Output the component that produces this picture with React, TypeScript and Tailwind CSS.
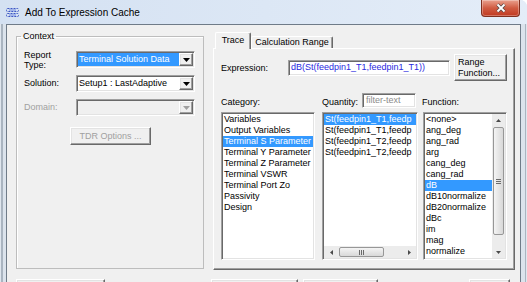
import React from "react";

const sunken =
  "border border-t-[#a0a0a0] border-l-[#a0a0a0] border-b-white border-r-white shadow-[inset_1px_1px_0_#696969,inset_-1px_-1px_0_#e3e3e3] p-[1px]";
const raised =
  "border border-t-white border-l-white border-b-[#696969] border-r-[#696969] shadow-[inset_-1px_-1px_0_#a0a0a0,inset_1px_1px_0_#e3e3e3] bg-[#f0f0f0]";

function Down({ c = "#000", w = 7, h = 4 }: { c?: string; w?: number; h?: number }) {
  return (
    <svg width={w} height={h} viewBox={`0 0 ${w} ${h}`}>
      <path d={`M0 0H${w}L${w / 2} ${h}Z`} fill={c} />
    </svg>
  );
}
function Up({ c = "#4a4a4a" }: { c?: string }) {
  return (
    <svg width="5" height="3" viewBox="0 0 5 3">
      <path d="M0 3H5L2.5 0Z" fill={c} />
    </svg>
  );
}
function Left() {
  return (
    <svg width="3" height="5" viewBox="0 0 3 5">
      <path d="M3 0V5L0 2.5Z" fill="#4a4a4a" />
    </svg>
  );
}
function Right() {
  return (
    <svg width="3" height="5" viewBox="0 0 3 5">
      <path d="M0 0V5L3 2.5Z" fill="#4a4a4a" />
    </svg>
  );
}

function Combo({ children, disabled }: { children?: React.ReactNode; disabled?: boolean }) {
  return (
    <div className={`w-[119px] h-[17px] flex ${sunken}`}>
      <div className={`flex-1 flex items-stretch ${disabled ? "bg-[#f0f0f0]" : "bg-white"}`}>{children}</div>
      <div className={`w-[14px] flex items-center justify-center ${raised}`}>
        <Down c={disabled ? "#a0a0a0" : "#000"} />
      </div>
    </div>
  );
}

function Item({ t, sel }: { t: string; sel?: boolean }) {
  return (
    <div
      className={`h-[11px] leading-[11px] whitespace-nowrap overflow-hidden pl-[1px] ${
        sel ? "bg-[#3399ff] text-white" : ""
      }`}
    >
      {t}
    </div>
  );
}

function TitleIcon() {
  return (
    <svg width="13" height="9" viewBox="0 0 13 9">
      <rect x="0.5" y="0.5" width="12" height="3" rx="1" fill="none" stroke="#3d56c4" strokeDasharray="2 1" />
      <rect x="0.5" y="5.5" width="12" height="3" rx="1" fill="none" stroke="#3d56c4" strokeDasharray="2 1" />
      <path d="M3 2H10M3 7H10" stroke="#6f86e0" strokeWidth="1" />
    </svg>
  );
}

const cats = [
  "Variables",
  "Output Variables",
  "Terminal S Parameter",
  "Terminal Y Parameter",
  "Terminal Z Parameter",
  "Terminal VSWR",
  "Terminal Port Zo",
  "Passivity",
  "Design",
];
const qty = [
  "St(feedpin1_T1,feedp",
  "St(feedpin1_T1,feedp",
  "St(feedpin1_T2,feedp",
  "St(feedpin1_T2,feedp",
];
const funcs = [
  "<none>",
  "ang_deg",
  "ang_rad",
  "arg",
  "cang_deg",
  "cang_rad",
  "dB",
  "dB10normalize",
  "dB20normalize",
  "dBc",
  "im",
  "mag",
  "normalize",
];

export default function App() {
  return (
    <div className="w-[527px] h-[282px] overflow-hidden flex flex-col bg-[#dae5f3] rounded-tr-[7px] font-[family-name:'Liberation_Sans',Arial,sans-serif] text-[9px] leading-[11px] text-black">
      {/* Title bar */}
      <div className="h-[24px] shrink-0 flex items-start bg-linear-to-r from-[#d4e1f2] to-[#e4edf8]">
        <div className="mt-[8px] ml-[6px] flex">
          <TitleIcon />
        </div>
        <div className="ml-[6px] mt-[6px] text-[10px] leading-[14px] text-black">Add To Expression Cache</div>
        <div className="ml-auto mr-[7px] w-[39px] h-[17px] rounded-b-[4px] border border-t-0 border-[#80301f] bg-linear-to-b from-[#e9a08e] via-[#d05b42] to-[#c0391f] shadow-[inset_0_0_0_1px_rgba(255,255,255,0.3)] flex items-center justify-center">
          <svg width="12" height="10" viewBox="0 0 12 10">
            <path d="M2.5 1.5L9.5 8.5M9.5 1.5L2.5 8.5" stroke="#5a4a48" strokeWidth="3.4" />
            <path d="M2.5 1.5L9.5 8.5M9.5 1.5L2.5 8.5" stroke="#ffffff" strokeWidth="1.8" />
          </svg>
        </div>
      </div>

      <div className="flex flex-1 min-h-0">
        <div className="w-[6px] shrink-0 bg-[linear-gradient(to_right,#dfe6ee_0,#dfe6ee_1px,#a9b4c0_1px,#a9b4c0_3px,#dbe3ec_3px)]" />
        <div className="flex-1 min-w-0 border-l border-t border-r border-[#6f7b88] bg-[#f0f0f0] flex flex-col overflow-hidden">
          <div className="flex items-start pl-[9px] pt-[6px] shrink-0">
            {/* Context group */}
            <fieldset className="w-[188px] h-[238px] border border-[#bdbdbd] shadow-[inset_1px_1px_0_#ffffff] pl-[7px]">
              <legend className="ml-[-3px] px-[2px] text-[9px] leading-[11px]">Context</legend>
              <div className="flex items-start mt-[8px]">
                <div className="w-[52px] leading-[10px]">
                  Report
                  <br />
                  Type:
                </div>
                <div className="mt-[1px]">
                  <Combo>
                    <div className="flex-1 bg-[#3399ff] text-white flex items-center pl-[1px] whitespace-nowrap overflow-hidden">
                      Terminal Solution Data
                    </div>
                  </Combo>
                </div>
              </div>
              <div className="flex items-center mt-[5px] h-[17px]">
                <div className="w-[52px]">Solution:</div>
                <Combo>
                  <div className="flex-1 flex items-center pl-[1px] whitespace-nowrap overflow-hidden">
                    Setup1 : LastAdaptive
                  </div>
                </Combo>
              </div>
              <div className="flex items-center mt-[7px] h-[17px]">
                <div className="w-[52px] text-[#a0a0a0]">Domain:</div>
                <Combo disabled />
              </div>
              <div
                className={`ml-[46px] mt-[11px] w-[81px] h-[18px] flex items-center justify-center text-[#a0a0a0] ${raised}`}
              >
                TDR Options ...
              </div>
            </fieldset>

            {/* Tab control */}
            <div className="ml-[9px] mt-[1px] w-[302px] flex flex-col">
              <div className="h-[16px] flex items-end pl-[2px]">
                <div className="relative z-10 h-[17px] w-[36px] -mb-[1px] bg-[#f0f0f0] border-l border-t border-r border-l-white border-t-white border-r-[#696969] shadow-[inset_-1px_0_0_#a0a0a0] rounded-t-[2px] flex justify-center pt-[2px]">
                  Trace
                </div>
                <div className="h-[12px] w-[82px] bg-[#f0f0f0] border-l border-t border-r border-l-white border-t-white border-r-[#696969] shadow-[inset_-1px_0_0_#a0a0a0] rounded-t-[2px] flex justify-center leading-[11px]">
                  Calculation Range
                </div>
              </div>
              <div className="h-[222px] border border-t-white border-l-white border-r-[#696969] border-b-[#696969] shadow-[inset_-1px_-1px_0_#a0a0a0] flex flex-col">
                {/* Expression row */}
                <div className="flex items-center mt-[5px] pl-[7px] h-[27px]">
                  <div className="w-[67px] mt-[2px]">Expression:</div>
                  <div className={`w-[162px] h-[16px] bg-white ${sunken}`}>
                    <div className="pl-[1px] h-full flex items-center text-[#2a2ae0] whitespace-nowrap overflow-hidden bg-white">
                      dB(St(feedpin1_T1,feedpin1_T1))
                    </div>
                  </div>
                  <div className={`ml-[4px] w-[53px] h-[27px] flex flex-col justify-center pl-[3px] leading-[11px] ${raised}`}>
                    <span>Range</span>
                    <span>Function...</span>
                  </div>
                </div>
                {/* labels row */}
                <div className="flex items-start mt-[12px] pl-[7px] h-[15px]">
                  <div className="w-[101px] mt-[4px]">Category:</div>
                  <div className="w-[40px] mt-[4px]">Quantity:</div>
                  <div className={`w-[54px] h-[15px] bg-white ${sunken}`}>
                    <div className="pl-[2px] h-full flex items-center text-[#8c8c8c] bg-white">filter-text</div>
                  </div>
                  <div className="ml-[6px] mt-[4px]">Function:</div>
                </div>
                {/* lists */}
                <div className="flex items-start mt-[4px] pl-[7px]">
                  <div className={`w-[94px] h-[148px] bg-white ${sunken}`}>
                    {cats.map((c, i) => (
                      <Item key={c} t={c} sel={i === 2} />
                    ))}
                  </div>
                  <div className={`ml-[7px] w-[96px] h-[148px] bg-white flex flex-col ${sunken}`}>
                    <div className="flex-1 overflow-hidden">
                      {qty.map((c, i) => (
                        <Item key={i} t={c} sel={i === 0} />
                      ))}
                    </div>
                    <div className="h-[12px] flex items-stretch bg-[#ececec]">
                      <div className="w-[14px] flex items-center justify-center">
                        <Left />
                      </div>
                      <div className="ml-[1px] my-[1px] w-[45px] rounded-[2px] border border-[#979797] bg-linear-to-b from-[#f4f4f4] to-[#d8d8d8] flex items-center justify-center gap-[1px]">
                        <div className="w-[1px] h-[5px] bg-[#6b6b6b]" />
                        <div className="w-[1px] h-[5px] bg-[#6b6b6b]" />
                        <div className="w-[1px] h-[5px] bg-[#6b6b6b]" />
                      </div>
                      <div className="flex-1" />
                      <div className="w-[14px] flex items-center justify-center">
                        <Right />
                      </div>
                    </div>
                  </div>
                  <div className={`ml-[5px] w-[84px] h-[148px] bg-white flex ${sunken}`}>
                    <div className="flex-1 overflow-hidden">
                      {funcs.map((c, i) => (
                        <Item key={c} t={c} sel={i === 6} />
                      ))}
                    </div>
                    <div className="w-[13px] flex flex-col bg-[#ececec]">
                      <div className="h-[12px] flex items-center justify-center">
                        <Up />
                      </div>
                      <div className="h-[1px]" />
                      <div className="h-[108px] mx-[1px] rounded-[2px] border border-[#979797] bg-linear-to-r from-[#f4f4f4] to-[#d8d8d8] flex flex-col items-center justify-center gap-[1px]">
                        <div className="w-[5px] h-[1px] bg-[#6b6b6b]" />
                        <div className="w-[5px] h-[1px] bg-[#6b6b6b]" />
                        <div className="w-[5px] h-[1px] bg-[#6b6b6b]" />
                      </div>
                      <div className="flex-1" />
                      <div className="h-[12px] flex items-center justify-center">
                        <Down c="#4a4a4a" w={5} h={3} />
                      </div>
                    </div>
                  </div>
                </div>
              </div>
            </div>
          </div>

          {/* bottom buttons (partially visible) */}
          <div className="flex items-start mt-[9px] pl-[9px] shrink-0">
            <div className={`w-[89px] h-[23px] ${raised}`} />
            <div className={`ml-[106px] w-[87px] h-[23px] ${raised}`} />
            <div className={`ml-[5px] w-[75px] h-[23px] ${raised}`} />
            <div className={`ml-[91px] w-[41px] h-[23px] ${raised}`} />
          </div>
        </div>
        <div className="w-[6px] shrink-0 bg-[linear-gradient(to_left,#dfe6ee_0,#dfe6ee_1px,#a9b4c0_1px,#a9b4c0_2px,#dbe3ec_2px)]" />
      </div>
    </div>
  );
}
